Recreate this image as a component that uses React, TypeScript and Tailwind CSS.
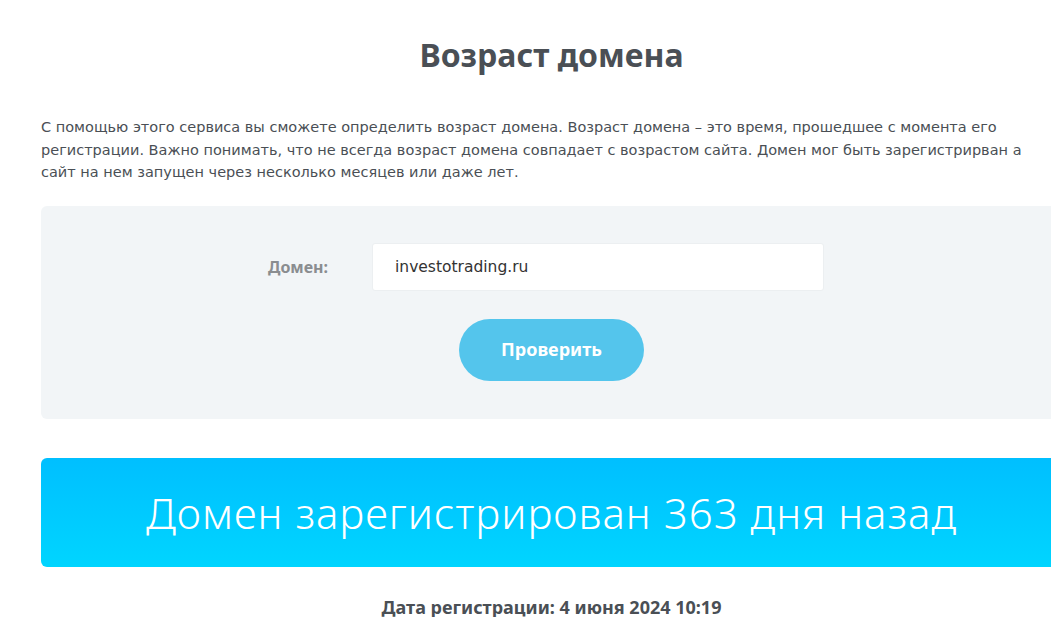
import { useState } from "react";

export default function App() {
  const [domain, setDomain] = useState("investotrading.ru");

  return (
    <div className="min-h-screen w-full overflow-x-hidden bg-white">
      <main className="ml-[41px] w-[1021px] pt-[33px]">
        <h1 className="text-center font-['Noto_Sans',sans-serif] text-[32px] font-bold leading-[44px] text-[#4a4f55]">
          Возраст домена
        </h1>

        <p className="mt-[39px] w-[1005px] font-['DejaVu_Sans',sans-serif] text-[14.5px] leading-[22.5px] text-[#4a4f55]">
          С помощью этого сервиса вы сможете определить возраст домена. Возраст домена – это время, прошедшее с
          момента его регистрации. Важно понимать, что не всегда возраст домена совпадает с возрастом сайта. Домен
          мог быть зарегистрирван а сайт на нем запущен через несколько месяцев или даже лет.
        </p>

        <form
          onSubmit={(e) => e.preventDefault()}
          className="mt-[22px] flex h-[213px] flex-col items-center rounded-md bg-[#f2f5f7] pt-[37px]"
        >
          <div className="flex items-center pr-[11px]">
            <label className="w-[104px] font-['Noto_Sans',sans-serif] text-[16px] font-bold text-[#8a8d90]">
              Домен:
            </label>
            <input
              value={domain}
              onChange={(e) => setDomain(e.target.value)}
              className="h-[48px] w-[452px] rounded-[3px] border border-[#eceff1] bg-white px-[22px] font-['DejaVu_Sans',sans-serif] text-[15.5px] text-[#333] outline-none"
            />
          </div>
          <button
            type="submit"
            className="mt-[28px] h-[62px] w-[185px] rounded-full bg-[#54c5ec] font-['Noto_Sans',sans-serif] text-[18px] font-bold text-white"
          >
            Проверить
          </button>
        </form>

        <section className="mt-[39px] flex h-[109px] items-center justify-center rounded-md bg-gradient-to-b from-[#00bfff] to-[#00d5ff]">
          <h2 className="font-['Noto_Sans',sans-serif] text-[42px] font-light tracking-[1px] text-white">
            Домен зарегистрирован 363 дня назад
          </h2>
        </section>

        <p className="mt-[27px] text-center font-['Noto_Sans',sans-serif] text-[18px] font-bold text-[#4a4f55]">
          Дата регистрации: 4 июня 2024 10:19
        </p>
      </main>
    </div>
  );
}
